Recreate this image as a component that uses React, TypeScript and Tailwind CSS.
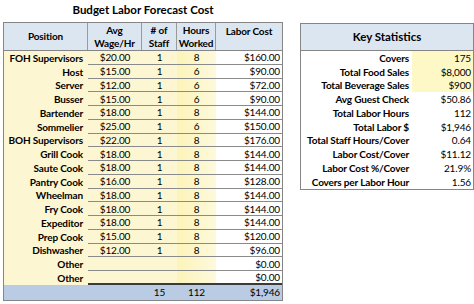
import React from "react";

const rows: [string, string, string, string, string][] = [
  ["FOH Supervisors", "$20.00", "1", "8", "$160.00"],
  ["Host", "$15.00", "1", "6", "$90.00"],
  ["Server", "$12.00", "1", "6", "$72.00"],
  ["Busser", "$15.00", "1", "6", "$90.00"],
  ["Bartender", "$18.00", "1", "8", "$144.00"],
  ["Sommelier", "$25.00", "1", "6", "$150.00"],
  ["BOH Supervisors", "$22.00", "1", "8", "$176.00"],
  ["Grill Cook", "$18.00", "1", "8", "$144.00"],
  ["Saute Cook", "$18.00", "1", "8", "$144.00"],
  ["Pantry Cook", "$16.00", "1", "8", "$128.00"],
  ["Wheelman", "$18.00", "1", "8", "$144.00"],
  ["Fry Cook", "$18.00", "1", "8", "$144.00"],
  ["Expeditor", "$18.00", "1", "8", "$144.00"],
  ["Prep Cook", "$15.00", "1", "8", "$120.00"],
  ["Dishwasher", "$12.00", "1", "8", "$96.00"],
  ["Other", "", "", "", "$0.00"],
  ["Other", "", "", "", "$0.00"],
];

const stats: [string, string, boolean][] = [
  ["Covers", "175", true],
  ["Total Food Sales", "$8,000", true],
  ["Total Beverage Sales", "$900", true],
  ["Avg Guest Check", "$50.86", false],
  ["Total Labor Hours", "112", false],
  ["Total Labor $", "$1,946", false],
  ["Total Staff Hours/Cover", "0.64", false],
  ["Labor Cost/Cover", "$11.12", false],
  ["Labor Cost %/Cover", "21.9%", false],
  ["Covers per Labor Hour", "1.56", false],
];

export default function App() {
  return (
    <div className="w-[474px] h-[304px] bg-white flex pl-[3px] font-['Lato','Liberation_Sans',sans-serif] text-black overflow-hidden whitespace-nowrap tracking-[-0.15px]">
      <div className="w-[280px] flex flex-col">
        <div className="h-[22px] flex items-center justify-center text-[11.5px] font-bold leading-none pb-[2px] tracking-[0px]">
          Budget Labor Forecast Cost
        </div>
        <div className="border border-[#858585] flex flex-col">
          <div className="h-[28px] flex bg-[#dce6f1] border-b border-[#858585] text-[10px] font-bold leading-[13px]">
            <div className="w-[84px] border-r border-[#9a9a9a] flex items-center justify-center">Position</div>
            <div className="w-[54px] border-r border-[#9a9a9a] flex flex-col items-center justify-center">
              <span>Avg</span>
              <span>Wage/Hr</span>
            </div>
            <div className="w-[35px] border-r border-[#9a9a9a] flex flex-col items-center justify-center">
              <span># of</span>
              <span>Staff</span>
            </div>
            <div className="w-[39px] border-r border-[#9a9a9a] flex flex-col items-center justify-center">
              <span>Hours</span>
              <span>Worked</span>
            </div>
            <div className="w-[66px] flex justify-center pt-[2px]">Labor Cost</div>
          </div>
          {rows.map((r, i) => {
            const last = i === rows.length - 1;
            const line = last ? "border-b-2 border-[#3a3a3a]" : "border-b border-[#8a8a8a]";
            return (
              <div key={i} className="h-[13.76px] flex text-[10px] leading-none">
                <div className="w-[84px] bg-[#fdf6d2] font-bold flex items-center justify-end pr-[5px]">{r[0]}</div>
                <div className={`w-[54px] bg-[#fdf6d2] flex items-center justify-center ${line}`}>{r[1]}</div>
                <div className={`w-[35px] bg-[#fdf6d2] flex items-center justify-center ${line}`}>{r[2]}</div>
                <div className={`w-[39px] bg-gradient-to-r from-[#fcf4b8] to-[#fdf9dc] flex items-center justify-center ${line}`}>{r[3]}</div>
                <div className={`w-[66px] bg-white flex items-center justify-end pr-[2px] ${line}`}>{r[4]}</div>
              </div>
            );
          })}
          <div className="h-[15px] flex bg-[#b9cce4] text-[10px] leading-none">
            <div className="w-[84px]" />
            <div className="w-[54px]" />
            <div className="w-[35px] flex items-center justify-center">15</div>
            <div className="w-[39px] flex items-center justify-center">112</div>
            <div className="w-[66px] flex items-center justify-end pr-[2px]">$1,946</div>
          </div>
        </div>
      </div>
      <div className="ml-[17px] w-[174px] flex flex-col pt-[23px]">
        <div className="border border-[#858585] flex flex-col">
          <div className="h-[27px] bg-[#dce6f1] border-b border-[#858585] flex items-center justify-center text-[11.5px] font-bold tracking-[0px]">
            Key Statistics
          </div>
          {stats.map(([k, v, y], i) => (
            <div key={i} className="h-[13.76px] flex text-[10px] leading-none">
              <div className="w-[111px] font-bold flex items-center justify-end pr-[3px]">{k}</div>
              <div className={`flex-1 flex items-center justify-end pr-[2px] ${y ? "bg-[#fdf8c6]" : "bg-white"}`}>{v}</div>
            </div>
          ))}
        </div>
      </div>
    </div>
  );
}
